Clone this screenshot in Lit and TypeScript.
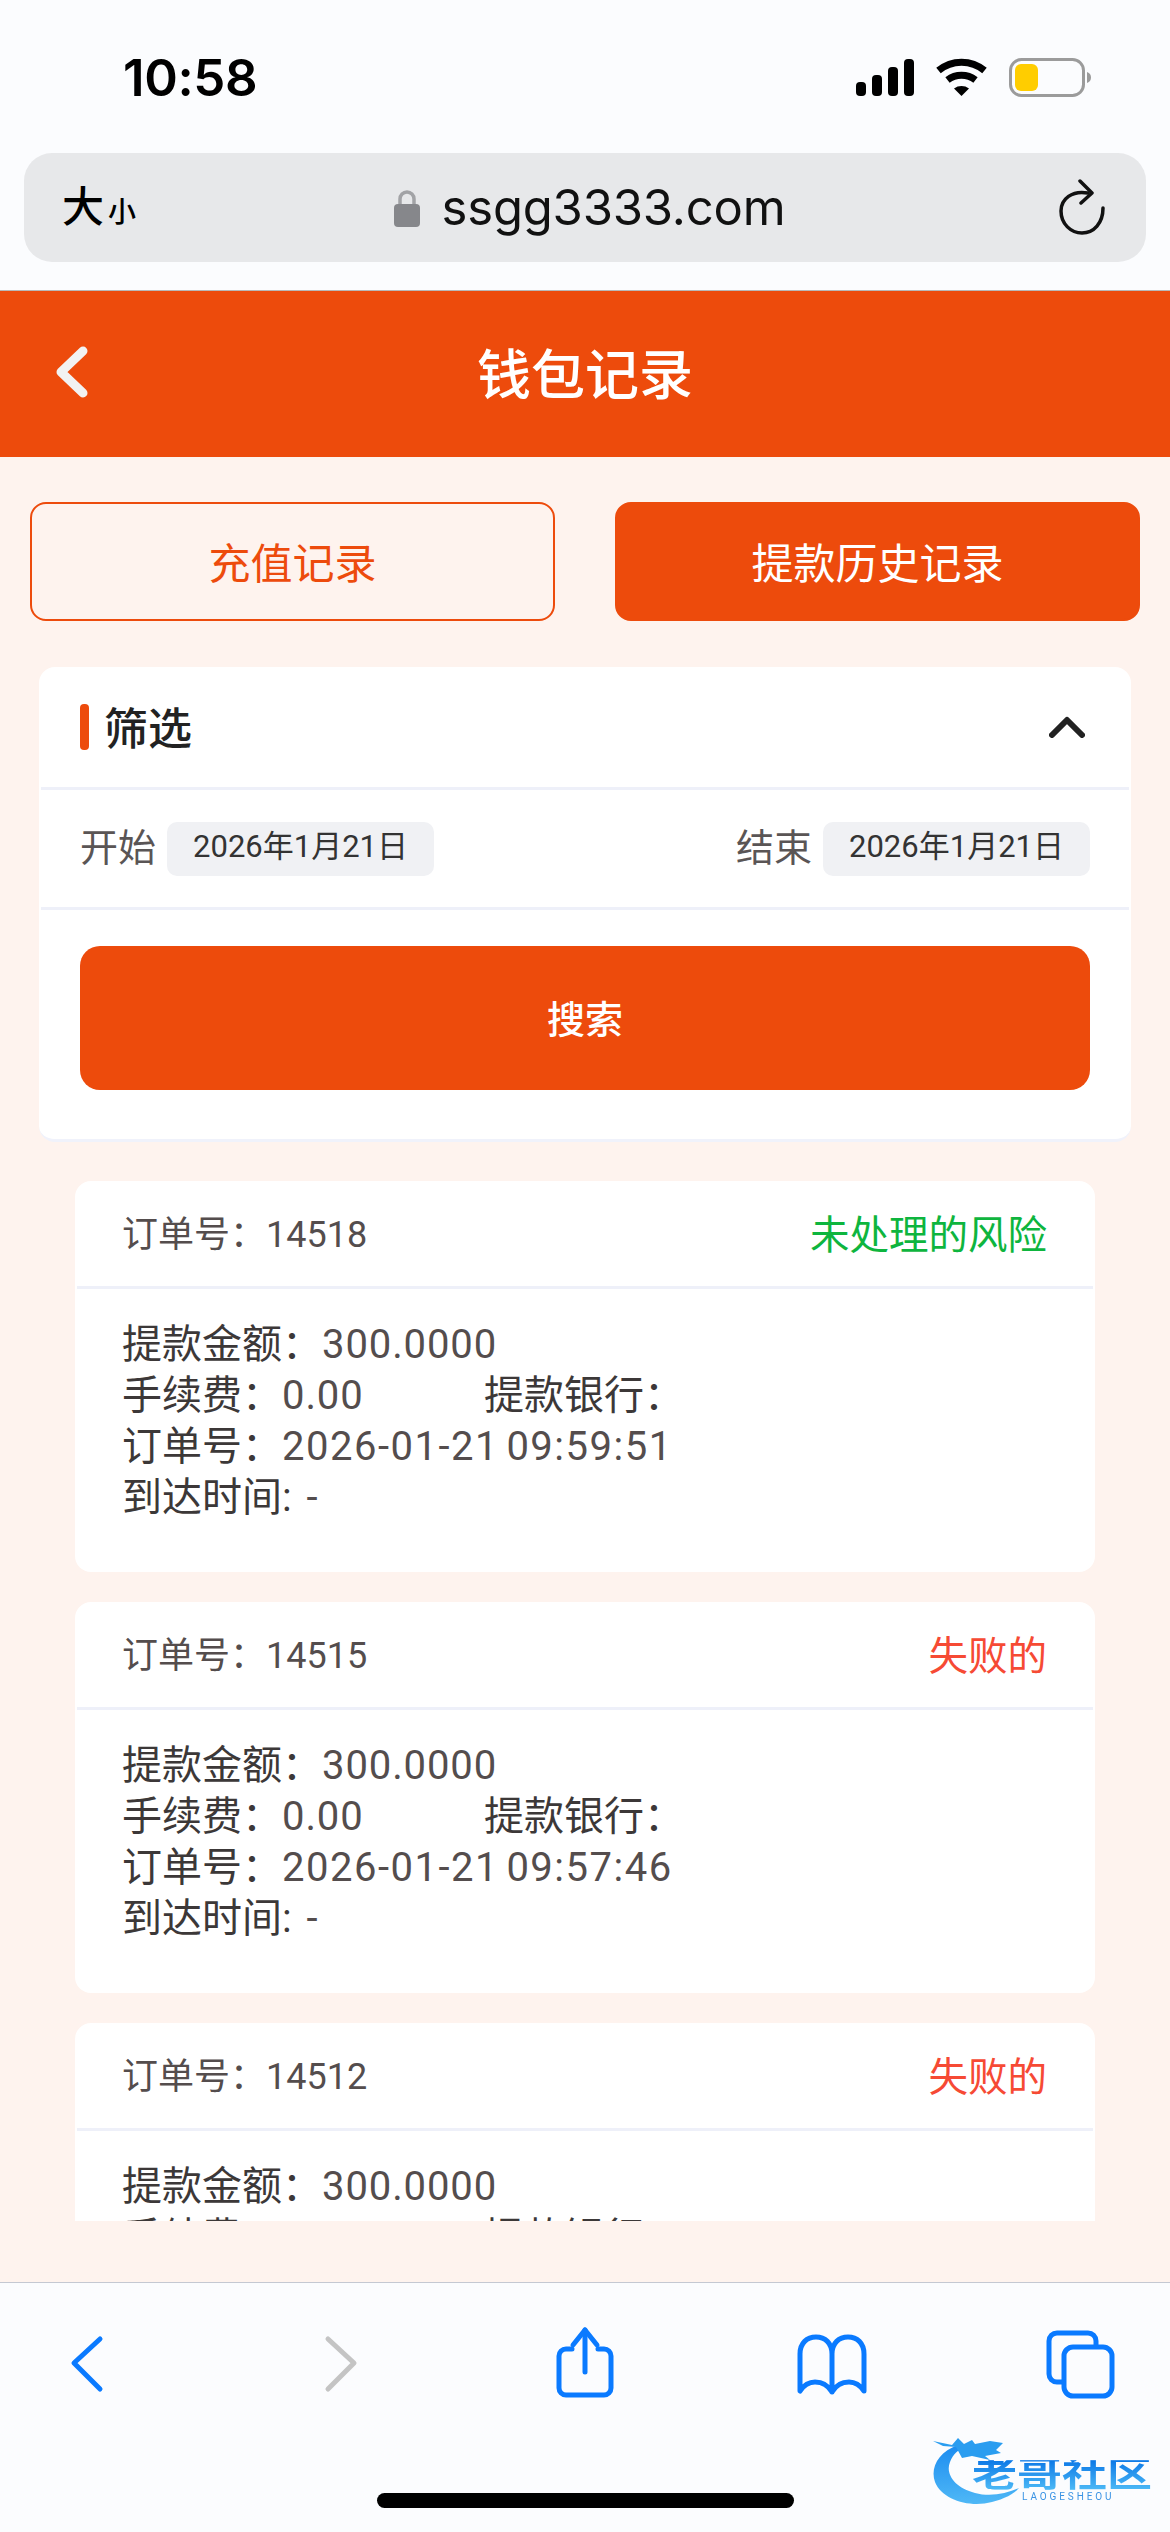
import { LitElement, html, css, svg } from "lit";
import { customElement } from "lit/decorators.js";

const records = [
  { id: "14518", status: "未处理的风险", tone: "ok", time: "2026-01-21 09:59:51" },
  { id: "14515", status: "失败的", tone: "bad", time: "2026-01-21 09:57:46" },
  { id: "14512", status: "失败的", tone: "bad", time: "2026-01-21 09:55:12" },
];

@customElement("app-root")
export class AppRoot extends LitElement {
  static styles = css`
    :host { display: block; width: 1170px; height: 2532px; font-family: Roboto, "Noto Sans CJK SC", sans-serif; }
    * { box-sizing: border-box; }
    .page { position: relative; width: 1170px; height: 2532px; display: flex; flex-direction: column; background: #fef3ee; overflow: hidden; }

    .chrome { height: 291px; flex: none; background: #fbfcfe; border-bottom: 1px solid #b9b9b9; display: flex; flex-direction: column; }
    .status { height: 153px; flex: none; display: flex; align-items: flex-start; justify-content: space-between; padding: 0 79px 0 123px; }
    .time { font-family: Inter, sans-serif; font-size: 51px; font-weight: 600; line-height: 48px; margin-top: 54px; color: #000; letter-spacing: -0.4px; }
    .status svg { margin-top: 58px; display: block; }
    .url { height: 109px; margin: 0 24px; border-radius: 28px; background: #e7e8ea; display: grid; grid-template-columns: 180px 1fr 100px; align-items: center; }
    .aa { padding-left: 38px; display: flex; align-items: baseline; gap: 4px; color: #000; font-weight: 500; }
    .aa b { font-weight: 500; font-size: 42px; line-height: 50px; }
    .aa i { font-style: normal; font-size: 28px; line-height: 30px; font-weight: 500; }
    .addr { display: flex; align-items: center; justify-content: center; gap: 22px; margin-left: -71px; }
    .addr span { font-family: Inter, sans-serif; font-size: 49px; color: #111; line-height: 60px; letter-spacing: -0.2px; }
    .reload { justify-self: end; margin: -2px 41px 0 0; display: block; }

    .nav { height: 166px; flex: none; background: #ed4b0c; display: flex; align-items: center; justify-content: center; position: relative; }
    .nav .back { position: absolute; left: 50px; top: 55px; }
    .nav h1 { margin: 0; font-size: 54px; font-weight: 500; color: #fff; line-height: 60px; margin-top: 5px; }

    .content { flex: 1; min-height: 0; display: flex; flex-direction: column; padding: 45px 0 61px; }
    .tabs { display: flex; justify-content: space-between; padding: 0 30px; flex: none; }
    .tab { width: 525px; height: 119px; border-radius: 16px; border: 2px solid #ed4b0c; color: #ed4b0c; font-size: 42px; padding-bottom: 3px; display: flex; align-items: center; justify-content: center; }
    .tab.on { background: #ed4b0c; color: #fff; }

    .filter { flex: none; margin: 46px 39px 39px; height: 475px; background: #fff; border-radius: 16px; border-bottom: 3px solid #f0f2fb; display: flex; flex-direction: column; }
    .fhead { height: 120px; flex: none; display: flex; align-items: center; justify-content: space-between; padding: 0 46px 0 41px; }
    .ftitle { display: flex; align-items: center; gap: 15px; font-size: 44px; font-weight: 500; color: #222; line-height: 56px; }
    .ftitle span { position: relative; top: 3px; }
    .ftitle::before { content: ""; width: 9px; height: 46px; border-radius: 4px; background: #ed4b0c; }
    .rule { height: 3px; flex: none; margin: 0 2px; background: #eef0f9; }
    .dates { height: 117px; flex: none; display: flex; align-items: center; justify-content: space-between; padding: 0 41px; }
    .date { display: flex; align-items: center; gap: 11px; font-size: 38px; color: #5a5555; line-height: 54px; }
    .date span { position: relative; top: -1px; }
    .chip { width: 267px; height: 54px; border-radius: 10px; background: #f0f1f4; color: #333; font-size: 31px; padding-bottom: 3px; display: flex; align-items: center; justify-content: center; }
    .search { margin: 36px 41px 0; height: 144px; flex: none; border-radius: 20px; background: #ed4b0c; color: #fff; font-size: 38px; font-weight: 500; padding-bottom: 3px; display: flex; align-items: center; justify-content: center; }

    .list { flex: 1; min-height: 0; overflow: hidden; padding: 0 75px; display: flex; flex-direction: column; gap: 30px; }
    .card { height: 391px; flex: none; background: #fff; border-radius: 16px; }
    .chead { height: 105px; display: flex; align-items: center; justify-content: space-between; padding: 0 48px 5px 47px; color: #544d4d; font-size: 36px; }
    .st { font-size: 39.5px; }
    .st.ok { color: #0eb53e; }
    .st.bad { color: #f64a34; }
    .cbody { padding: 30px 47px 0; color: #544d4d; font-size: 40px; line-height: 51px; }
    .row { display: flex; height: 51px; white-space: pre; letter-spacing: 0.9px; }
    .row em { font-style: normal; letter-spacing: 0; color: #3c3838; }
    .row .stamp { letter-spacing: 1.5px; word-spacing: -4px; }
    .row .dash { margin-left: 5px; }
    .fee { width: 362px; }

    .toolbar { height: 250px; flex: none; background: #fbfcfe; border-top: 1px solid #c4c8d2; display: flex; flex-direction: column; align-items: center; }
    .tools { width: 100%; margin-top: 39px; display: grid; grid-template-columns: 174px 334px 154px 340px 154px; justify-items: center; }
    .tools svg { display: block; }
    .home { margin-top: 91px; width: 417px; height: 15px; border-radius: 8px; background: #000; }

    .logo { position: absolute; left: 925px; top: 2425px; width: 235px; height: 95px; filter: blur(0.7px); }
    .logo svg { position: absolute; left: 0; top: 0; display: block; }
    .logo .cn { position: absolute; left: 47px; top: 31px; width: 190px; font-size: 45px; line-height: 38px; font-weight: 700; white-space: nowrap; transform: scaleY(0.78); background: linear-gradient(#0c78e6, #4cb9f6); -webkit-background-clip: text; background-clip: text; color: transparent; }
    .logo .en { position: absolute; left: 97px; top: 66px; font-size: 10px; line-height: 12px; letter-spacing: 2.9px; color: #3a93e4; white-space: nowrap; }
  `;

  private toolIcon(body: unknown) {
    return html`<svg width="80" height="80" viewBox="0 0 80 80" fill="none" stroke="#0a7aff" stroke-width="5" stroke-linecap="round" stroke-linejoin="round">${body}</svg>`;
  }

  render() {
    return html`<div class="page">
      <div class="chrome">
        <div class="status">
          <div class="time">10:58</div>
          <svg width="235" height="40" viewBox="856 58 235 40">
            <rect x="856" y="82" width="10" height="14" rx="4" fill="#000"/>
            <rect x="872" y="75" width="10" height="21" rx="4" fill="#000"/>
            <rect x="888" y="67" width="10" height="29" rx="4" fill="#000"/>
            <rect x="904" y="59" width="10" height="37" rx="4" fill="#000"/>
            <path d="M938.5 70.5 A36 36 0 0 1 984.5 70.5" fill="none" stroke="#000" stroke-width="7"/>
            <path d="M947.5 80 A23 23 0 0 1 975.5 80" fill="none" stroke="#000" stroke-width="7"/>
            <path d="M954 88.5 A13 13 0 0 1 969 88.5 L961.5 96 Z" fill="#000"/>
            <rect x="1010.5" y="59.5" width="73" height="36" rx="11" fill="none" stroke="#9b9b9b" stroke-width="3"/>
            <rect x="1015" y="64" width="23" height="27" rx="6" fill="#ffcd00"/>
            <path d="M1087 72 c3 1 4 3 4 5.500 s-1 4.500 -4 5.500 Z" fill="#9b9b9b"/>
          </svg>
        </div>
        <div class="url">
          <div class="aa"><b>大</b><i>小</i></div>
          <div class="addr">
            <svg width="26" height="38" viewBox="0 0 26 38"><path d="M6 17 V10 a7 7 0 0 1 14 0 V17" fill="none" stroke="#a2a3a6" stroke-width="3.500"/><rect x="0" y="15" width="26" height="23" rx="4" fill="#86878b"/></svg>
            <span>ssgg3333.com</span>
          </div>
          <svg class="reload" width="46" height="56" viewBox="1057 177 46 56" fill="none" stroke="#111" stroke-width="3.500" stroke-linecap="round" stroke-linejoin="round">
            <path d="M1086 191 C1070 188 1059 197 1059 209 C1059 222 1069 231 1080 231 C1092 231 1101 221 1101 206"/>
            <path d="M1078 179 L1090 191 L1079 201"/>
          </svg>
        </div>
      </div>

      <div class="nav">
        <svg class="back" width="44" height="60" viewBox="0 0 44 60" fill="none" stroke="#f2f2f2" stroke-width="9" stroke-linecap="round" stroke-linejoin="round"><path d="M33 5 L11 26 L33 47"/></svg>
        <h1>钱包记录</h1>
      </div>

      <div class="content">
        <div class="tabs">
          <div class="tab">充值记录</div>
          <div class="tab on">提款历史记录</div>
        </div>
        <div class="filter">
          <div class="fhead">
            <div class="ftitle"><span>筛选</span></div>
            <svg width="36" height="22" viewBox="0 0 36 22" fill="none" stroke="#222" stroke-width="6" stroke-linecap="round" stroke-linejoin="round"><path d="M3 19 L18 4 L33 19"/></svg>
          </div>
          <div class="rule"></div>
          <div class="dates">
            <div class="date"><span>开始</span><div class="chip">2026年1月21日</div></div>
            <div class="date"><span>结束</span><div class="chip">2026年1月21日</div></div>
          </div>
          <div class="rule"></div>
          <div class="search">搜索</div>
        </div>
        <div class="list">
          ${records.map((r) => html`<div class="card">
            <div class="chead"><span>订单号：${r.id}</span><span class="st ${r.tone}">${r.status}</span></div>
            <div class="rule"></div>
            <div class="cbody">
              <div class="row"><em>提款金额：</em>300.0000</div>
              <div class="row"><span class="fee"><em>手续费：</em>0.00</span><em>提款银行：</em></div>
              <div class="row"><em>订单号：</em><span class="stamp">${r.time}</span></div>
              <div class="row"><em>到达时间: </em><span class="dash">-</span></div>
            </div>
          </div>`)}
        </div>
      </div>

      <div class="toolbar">
        <div class="tools">
          ${this.toolIcon(svg`<path d="M53 17 L27 41 L53 67" stroke-width="5"/>`)}
          ${this.toolIcon(svg`<path d="M27 17 L53 41 L27 67" stroke="#c4c4c4"/>`)}
          ${this.toolIcon(svg`<path d="M27 27 H21 a7 7 0 0 0 -7 7 V66 a7 7 0 0 0 7 7 H59 a7 7 0 0 0 7 -7 V34 a7 7 0 0 0 -7 -7 H53"/><path d="M40 8 V50"/><path d="M28 23 L40 8 L52 23"/>`)}
          ${this.toolIcon(svg`<path d="M40 32 V70 C36 63 29 60 23 60 C17 60 12 63 8 69 V32 C8 21 15 15 24 15 C33 15 40 21 40 32 C40 21 47 15 56 15 C65 15 72 21 72 32 V69 C68 63 63 60 57 60 C51 60 44 63 40 70"/>`)}
          ${this.toolIcon(svg`<rect x="25" y="25" width="48" height="49" rx="9"/><path d="M57 24 V19 a8 8 0 0 0 -8 -8 H18 a8 8 0 0 0 -8 8 V52 a8 8 0 0 0 8 8 h6"/>`)}
        </div>
        <div class="home"></div>
      </div>

      <div class="logo">
        <svg width="235" height="95" viewBox="925 2425 235 95">
          <defs><linearGradient id="sw" x1="0" y1="0" x2="0" y2="1"><stop offset="0" stop-color="#1c8cf0"/><stop offset="1" stop-color="#4fb8f6"/></linearGradient></defs>
          <path d="M958 2445 C938 2452 930 2468 935 2482 C942 2500 970 2508 992 2502 C1004 2499 1014 2494 1019 2488 C1005 2494 990 2497 975 2493 C955 2488 945 2474 950 2462 C953 2454 958 2450 966 2446 Z" fill="url(#sw)"/>
          <path d="M933 2441 L952 2445 L958 2438 L964 2444 L972 2440 L975 2444 L990 2441 L1003 2443 L996 2450 L1001 2453 L985 2456 L990 2460 L972 2456 L962 2458 L956 2447 L943 2446 Z" fill="#2a9df0"/>
        </svg>
        <div class="cn">老哥社区</div>
        <div class="en">LAOGESHEOU</div>
      </div>
    </div>`;
  }
}
